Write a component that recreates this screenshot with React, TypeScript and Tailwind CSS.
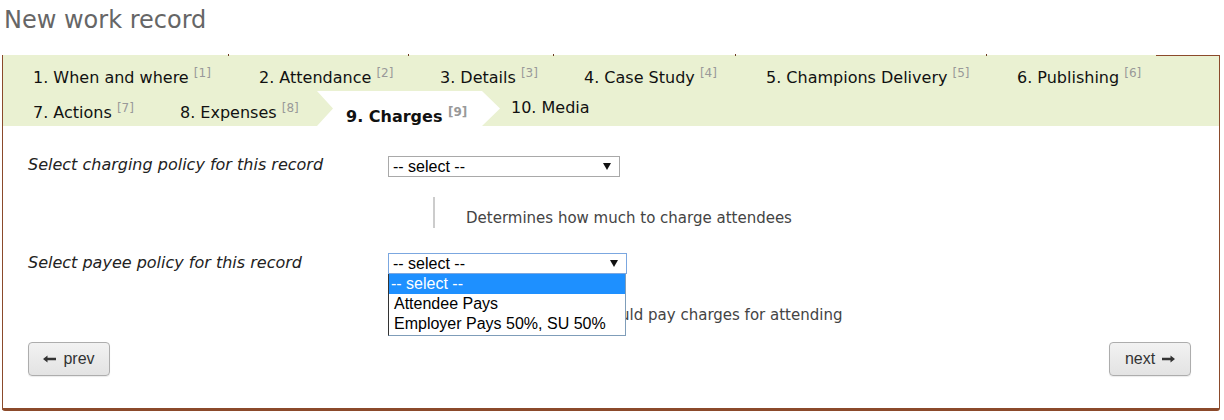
import React from "react";

const SANS = "font-['DejaVu_Sans','Verdana',sans-serif]";
const ARIAL = "font-['Liberation_Sans','Arial',sans-serif]";

function Tab({ label, num, className }: { label: string; num: number; className: string }) {
  return (
    <div className={`shrink-0 leading-[26px] text-[16px] text-[#111] ${className}`}>
      {label} <sup className="text-[12px] text-[#999]">[{num}]</sup>
    </div>
  );
}

function Caret() {
  return (
    <svg width="8" height="7" viewBox="0 0 8 7" className="shrink-0">
      <path d="M0 0 L8 0 L4 7 Z" fill="#111" />
    </svg>
  );
}

function ArrowLeft() {
  return (
    <svg width="13" height="8" viewBox="0 0 13 8">
      <path d="M0 4 L4.5 0.6 L4.5 2.8 L13 2.8 L13 5.2 L4.5 5.2 L4.5 7.4 Z" fill="#333" />
    </svg>
  );
}

function ArrowRight() {
  return (
    <svg width="13" height="8" viewBox="0 0 13 8">
      <path d="M13 4 L8.5 0.6 L8.5 2.8 L0 2.8 L0 5.2 L8.5 5.2 L8.5 7.4 Z" fill="#333" />
    </svg>
  );
}

function Help({ children }: { children: React.ReactNode }) {
  return (
    <div className={`ml-[405px] h-[31px] border-l-2 border-[#cccccc] pl-[31px] pt-[12px] text-[15px] leading-[18px] text-[#444] ${SANS}`}>
      {children}
    </div>
  );
}

function NavButton({ children }: { children: React.ReactNode }) {
  return (
    <button
      className={`flex h-[34px] w-[82px] items-center justify-center gap-[7px] rounded-[4px] border border-[#adadad] bg-gradient-to-b from-[#f2f2f2] to-[#e3e3e3] text-[16px] text-[#333] shadow-[0_1px_1px_rgba(0,0,0,0.08)] ${ARIAL}`}
    >
      {children}
    </button>
  );
}

export default function App() {
  return (
    <div className={`w-[1224px] bg-white ${SANS}`}>
      <div className="h-[55px] pl-[4px] pt-[2px]">
        <h1 className="text-[24px] font-normal leading-[36px] text-[#666]">New work record</h1>
      </div>

      <div className="relative ml-[2px] w-[1218px] rounded-b-[3px] border-x border-b-[3px] border-[#8b4a2b]">
        {/* small marks along the top edge */}
        <div className="absolute -top-[1px] left-[225px] h-[2px] w-px bg-[#6b3a22]" />
        <div className="absolute -top-[1px] left-[405px] h-[2px] w-px bg-[#6b3a22]" />
        <div className="absolute -top-[1px] left-[550px] h-[2px] w-px bg-[#6b3a22]" />
        <div className="absolute -top-[1px] left-[732px] h-[2px] w-px bg-[#6b3a22]" />
        <div className="absolute -top-[1px] left-[983px] h-[2px] w-px bg-[#6b3a22]" />
        <div className="absolute top-0 right-[-1px] h-px w-[64px] bg-[#8b4a2b]" />

        {/* tabs */}
        <div className="bg-[#eaf1d2] pl-[30px]">
          <div className="flex h-[36px] items-start pt-[10px]">
            <Tab label="1. When and where" num={1} className="w-[226px]" />
            <Tab label="2. Attendance" num={2} className="w-[181px]" />
            <Tab label="3. Details" num={3} className="w-[144px]" />
            <Tab label="4. Case Study" num={4} className="w-[182px]" />
            <Tab label="5. Champions Delivery" num={5} className="w-[251px]" />
            <Tab label="6. Publishing" num={6} className="w-[160px]" />
          </div>
          <div className="flex h-[35px] items-start">
            <Tab label="7. Actions" num={7} className="w-[147px] pt-[9px]" />
            <Tab label="8. Expenses" num={8} className="w-[137px] pt-[9px]" />
            <div className="h-[35px] w-[183px] shrink-0 bg-white pl-[29px] pt-[13px] [clip-path:polygon(0_0,165px_0,183px_50%,165px_100%,0_100%,16px_50%)]">
              <div className="text-[16px] font-bold leading-[26px] text-[#111]">
                9. Charges <sup className="text-[12px] text-[#999]">[9]</sup>
              </div>
            </div>
            <Tab label="10. Media" num={10} className="ml-[11px] pt-[4px] [&>sup]:hidden" />
          </div>
        </div>

        {/* form */}
        <div className="pl-[25px] pr-[28px] pt-[30px] pb-[32px]">
          <div className="flex items-start">
            <div className="w-[360px] shrink-0 text-[16px] italic leading-[17px] text-[#222]">
              Select charging policy for this record
            </div>
            <div className={`flex h-[21px] w-[232px] items-center justify-between border border-[#a9a9a9] pl-[4px] pr-[8px] text-[16px] leading-[19px] text-black ${ARIAL}`}>
              <span>-- select --</span>
              <Caret />
            </div>
          </div>

          <div className="mt-[20px]">
            <Help>Determines how much to charge attendees</Help>
          </div>

          <div className="mt-[25px] flex items-start">
            <div className="w-[360px] shrink-0 pt-[1px] text-[16px] italic leading-[17px] text-[#222]">
              Select payee policy for this record
            </div>
            <div className="relative z-10">
              <div className={`flex h-[21px] w-[239px] items-center justify-between border border-[#7ba7e0] pl-[4px] pr-[8px] text-[16px] leading-[19px] text-black ${ARIAL}`}>
                <span>-- select --</span>
                <Caret />
              </div>
              <div className={`absolute left-0 top-full w-[238px] border border-[#7f9db9] border-l-[#333] border-t-0 bg-white text-[16px] leading-[20px] text-black ${ARIAL}`}>
                <div className="h-[20px] bg-[#1e90ff] pl-[2px] text-white">-- select --</div>
                <div className="h-[20px] pl-[5px]">Attendee Pays</div>
                <div className="h-[21px] pl-[5px]">Employer Pays 50%, SU 50%</div>
              </div>
            </div>
          </div>

          <div className="mt-[20px]">
            <Help>Determines who should pay charges for attending</Help>
          </div>

          <div className="mt-[17px] flex items-center justify-between">
            <NavButton>
              <ArrowLeft />
              <span>prev</span>
            </NavButton>
            <NavButton>
              <span>next</span>
              <ArrowRight />
            </NavButton>
          </div>
        </div>
      </div>
    </div>
  );
}
